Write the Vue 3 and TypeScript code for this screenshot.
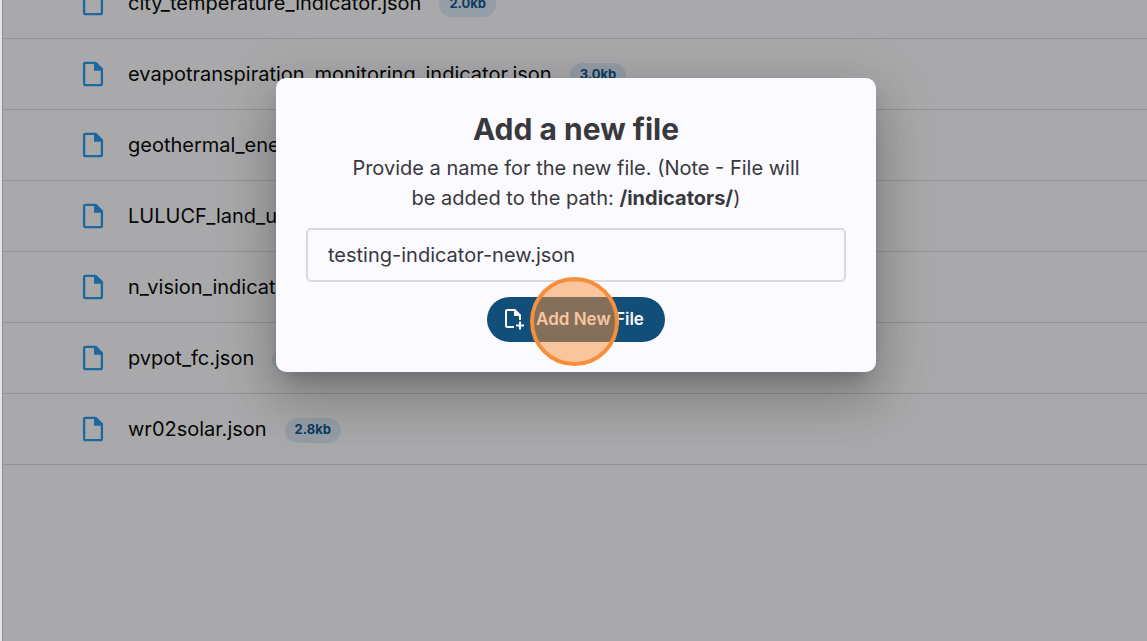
<script setup lang="ts">
import { ref } from 'vue'

interface FileEntry {
  name: string
  size: string
}

const files: FileEntry[] = [
  { name: 'city_temperature_indicator.json', size: '2.0kb' },
  { name: 'evapotranspiration_monitoring_indicator.json', size: '3.0kb' },
  { name: 'geothermal_energy_indicator.json', size: '2.4kb' },
  { name: 'LULUCF_land_use_indicator.json', size: '2.6kb' },
  { name: 'n_vision_indicator.json', size: '2.2kb' },
  { name: 'pvpot_fc.json', size: '2.5kb' },
  { name: 'wr02solar.json', size: '2.8kb' },
]

const fileName = ref('testing-indicator-new.json')
</script>

<template>
  <div class="page">
    <main class="panel">
      <ul class="files">
        <li v-for="file in files" :key="file.name" class="file">
          <svg class="file-icon" viewBox="0 0 22 26" aria-hidden="true">
            <path
              d="M3.3 1.8H13.6L19.9 8V22.7Q19.9 24.2 18.4 24.2H3.6Q2.1 24.2 2.1 22.7V3.3Q2.1 1.8 3.6 1.8Z"
              fill="none"
              stroke="currentColor"
              stroke-width="2.3"
              stroke-linejoin="round"
            />
            <path d="M12 1.5H14L20.5 8V9.7H12Z" fill="currentColor" />
          </svg>
          <span class="file-name">{{ file.name }}</span>
          <span class="file-size">{{ file.size }}</span>
        </li>
      </ul>
    </main>

    <div class="overlay">
      <form class="dialog" role="dialog" aria-modal="true" aria-labelledby="dialog-title" @submit.prevent>
        <h2 id="dialog-title" class="title">Add a new file</h2>
        <label class="note" for="file-name">
          Provide a name for the new file. (Note - File will be added to the path:
          <strong>/indicators/</strong>)
        </label>
        <input id="file-name" v-model="fileName" class="field" type="text" spellcheck="false" />
        <div class="action">
          <button class="submit" type="submit">
            <svg class="submit-icon" viewBox="0 0 20 22" aria-hidden="true">
              <path
                d="M10 19H3.2Q2 19 2 17.8V3.2Q2 2 3.2 2H10.5L16 7.5V12"
                fill="none"
                stroke="currentColor"
                stroke-width="2"
              />
              <path d="M10 1H11L17 7V8H10Z" fill="currentColor" />
              <path d="M16 13.5V21.5M12 17.5H20" fill="none" stroke="currentColor" stroke-width="2" />
            </svg>
            Add New File
          </button>
          <span class="pointer" aria-hidden="true"></span>
        </div>
      </form>
    </div>
  </div>
</template>

<style>
body {
  margin: 0;
}
</style>

<style scoped>
.page {
  position: relative;
  box-sizing: border-box;
  height: 100vh;
  padding-left: 2px;
  overflow: hidden;
  background: #e4e4e6;
  font-family: Inter, 'Liberation Sans', sans-serif;
}

.panel {
  height: 100%;
  overflow: hidden;
  border-left: 1px solid #8e8f91;
  background: #a9a9ab;
}

.files {
  margin: -32px 0 0;
  padding: 0;
  list-style: none;
}

.file {
  display: flex;
  align-items: center;
  box-sizing: border-box;
  height: 71px;
  padding-left: 79px;
  border-bottom: 1px solid #929395;
}

.file-icon {
  flex: none;
  width: 22px;
  height: 26px;
  margin-right: 24px;
  color: #1f689f;
}

.file-name {
  color: #060607;
  font-size: 20px;
  line-height: 30px;
}

.file-size {
  margin: 3px 0 0 18px;
  padding: 0 10px 2px;
  border-radius: 13px;
  background: #959da7;
  color: #0d3c5f;
  font-size: 13px;
  font-weight: 700;
  line-height: 23px;
}

.overlay {
  position: absolute;
  inset: 0;
  display: flex;
  align-items: flex-start;
  justify-content: center;
  padding: 78px 0 0 5px;
}

.dialog {
  box-sizing: border-box;
  width: 600px;
  max-width: 100%;
  padding: 29px 30px 30px;
  border-radius: 10px;
  background: #fafaff;
  box-shadow:
    0 14px 19px -9px rgba(0, 0, 0, 0.2),
    0 30px 48px 4px rgba(0, 0, 0, 0.14),
    0 11px 58px 10px rgba(0, 0, 0, 0.12);
  color: #38383d;
  text-align: center;
}

.title {
  margin: 0 0 1px;
  font-size: 30px;
  font-weight: 700;
  line-height: 45px;
}

.note {
  display: block;
  padding: 0 36px;
  font-size: 20px;
  line-height: 30px;
}

.field {
  box-sizing: border-box;
  width: 100%;
  height: 54px;
  margin: 15px 0;
  padding: 0 20px;
  border: 2px solid #d9d9df;
  border-radius: 5px;
  outline: none;
  background: transparent;
  color: #38383d;
  font: inherit;
  font-size: 20px;
}

.action {
  position: relative;
  display: flex;
  justify-content: center;
}

.submit {
  display: flex;
  align-items: center;
  gap: 12px;
  height: 45px;
  padding: 0 21px 2px 17px;
  border: 0;
  border-radius: 23px;
  background: #114f7a;
  color: #fafaff;
  font: inherit;
  font-size: 17px;
  font-weight: 600;
}

.submit-icon {
  width: 20px;
  height: 22px;
}

.pointer {
  position: absolute;
  top: -20px;
  left: calc(50% - 46px);
  box-sizing: border-box;
  width: 89px;
  height: 89px;
  border: 4px solid #f68f3a;
  border-radius: 50%;
  background: rgba(247, 144, 59, 0.5);
  pointer-events: none;
}
</style>
